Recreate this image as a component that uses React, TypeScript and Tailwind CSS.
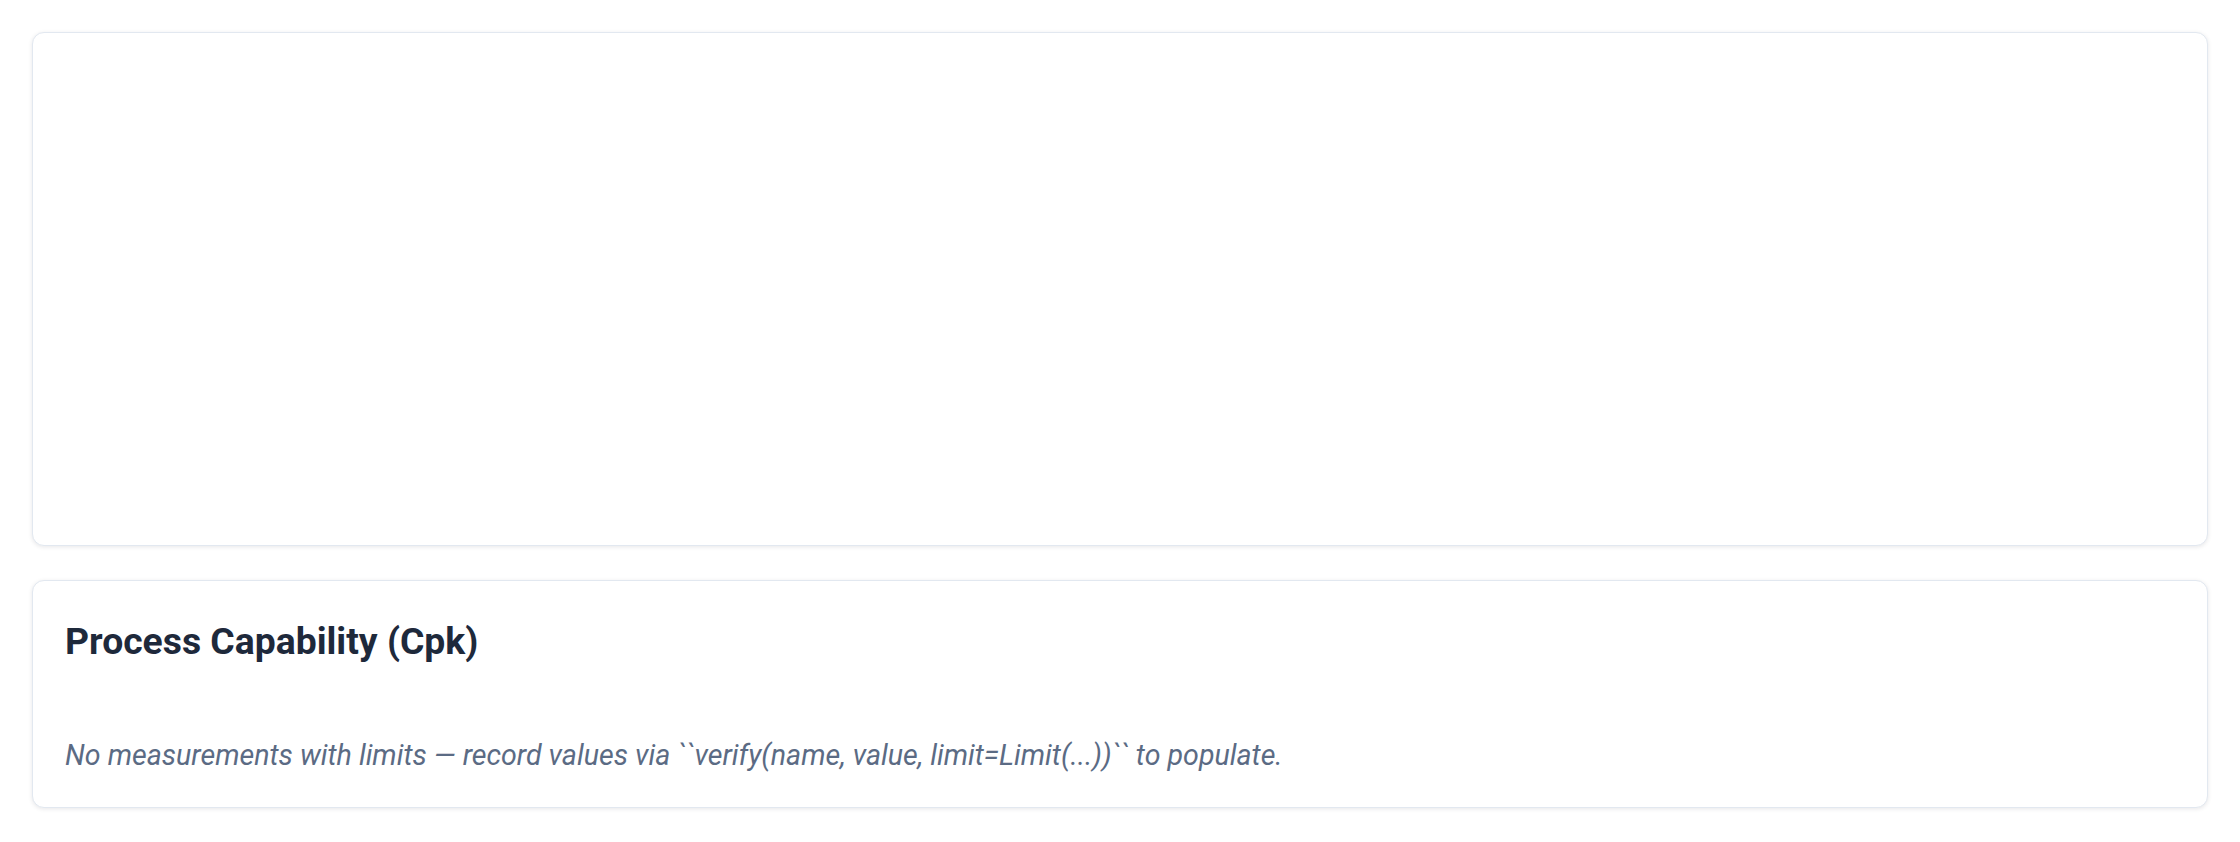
import React from "react";

export default function App() {
  return (
    <div
      className="min-h-[842px] w-full bg-white p-8"
      style={{ fontFamily: "Roboto, 'Noto Sans', sans-serif" }}
    >
      <div className="h-[514px] rounded-xl border border-[#e2e8f0] bg-white shadow-[0_1px_4px_rgba(15,23,42,0.1)]" />
      <div className="mt-[34px] h-[228px] rounded-xl border border-[#e2e8f0] bg-white px-8 pt-[38px] shadow-[0_1px_4px_rgba(15,23,42,0.1)]">
        <h2 className="text-[37.3px] leading-[44px] font-bold text-[#1e293b]">
          Process Capability (Cpk)
        </h2>
        <p className="mt-[72px] text-[28.6px] leading-[40px] italic text-[#5b6b84]">
          No measurements with limits — record values via ``verify(name, value, limit=Limit(...))`` to populate.
        </p>
      </div>
    </div>
  );
}
